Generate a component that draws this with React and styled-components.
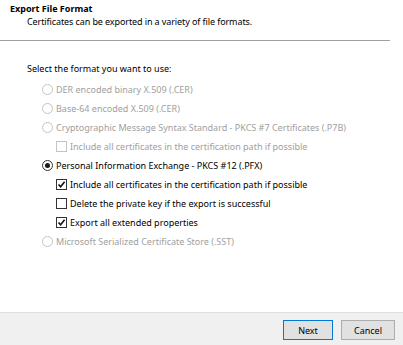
import React from "react";
import styled, {createGlobalStyle} from "styled-components";

const GlobalStyle = createGlobalStyle`
  html, body {
    margin: 0;
    padding: 0;
    background: #ffffff;
  }
  body {
    font-family: "Noto Sans", "Open Sans", sans-serif;
    font-size: 9px;
    color: #000000;
  }
`;

const Dialog = styled.div`
  width: 403px;
  height: 345px;
  display: flex;
  flex-direction: column;
  overflow: hidden;
  background: #ffffff;
`;

const Header = styled.div`
  display: flex;
  flex-direction: column;
  padding: 2px 0 0 10px;
  height: 38px;
  border-bottom: 1px solid #a0a0a0;
  width: 380px;
  box-sizing: content-box;
`;

const Title = styled.div`
  font-weight: 700;
  line-height: 13px;
`;

const Subtitle = styled.div`
  padding-left: 17px;
  line-height: 13px;
  letter-spacing: -0.1px;
`;

const Body = styled.div`
  flex: 1;
  display: flex;
  flex-direction: column;
  padding: 21px 0 0 27px;
`;

const Prompt = styled.div`
  line-height: 13px;
  margin-bottom: 5px;
`;

const Option = styled.label`
  display: flex;
  align-items: center;
  height: 19px;
  padding-left: ${({indent}) => indent || 15}px;
  gap: 3px;
  color: ${({disabled}) => (disabled ? "#a0a0a0" : "#000000")};
`;

const Radio = styled.span`
  width: 9px;
  height: 9px;
  border-radius: 50%;
  border: 1px solid ${({disabled}) => (disabled ? "#c4c4c4" : "#333333")};
  background: #ffffff;
  display: flex;
  align-items: center;
  justify-content: center;
  flex-shrink: 0;

  &::after {
    content: "";
    width: 5px;
    height: 5px;
    border-radius: 50%;
    background: #1a1a1a;
    display: ${({checked}) => (checked ? "block" : "none")};
  }
`;

const Box = styled.span`
  width: 9px;
  height: 9px;
  border: 1px solid ${({disabled}) => (disabled ? "#c4c4c4" : "#333333")};
  background: #ffffff;
  display: flex;
  align-items: center;
  justify-content: center;
  flex-shrink: 0;
`;

const Footer = styled.div`
  height: 33px;
  flex-shrink: 0;
  background: #f0f0f0;
  border-top: 1px solid #dfdfdf;
  display: flex;
  justify-content: flex-end;
  align-items: flex-start;
  padding: 7px 8px 0 0;
  gap: 8px;
  box-sizing: border-box;
`;

const Button = styled.button`
  width: ${({wide}) => (wide ? 54 : 50)}px;
  height: 20px;
  padding: 0;
  font-family: inherit;
  font-size: 9px;
  color: #000000;
  background: #e1e1e1;
  border: 1px solid ${({primary}) => (primary ? "#0078d7" : "#adadad")};
  box-shadow: ${({primary}) => (primary ? "inset 0 0 0 1px #e1e1e1" : "none")};
`;

const Check = () => (
    <svg width="9" height="9" viewBox="0 0 9 9">
        <path d="M1.5 4.5 L3.6 6.8 L7.6 1.8" fill="none" stroke="#111" strokeWidth="1.6"/>
    </svg>
);

const RadioOption = ({label, checked, disabled}) => (
    <Option disabled={disabled}>
        <Radio checked={checked} disabled={disabled}/>
        {label}
    </Option>
);

const CheckOption = ({label, checked, disabled}) => (
    <Option disabled={disabled} indent={29}>
        <Box disabled={disabled}>{checked ? <Check/> : null}</Box>
        {label}
    </Option>
);

const App = () => {
    return (
        <Dialog>
            <GlobalStyle/>
            <Header>
                <Title>Export File Format</Title>
                <Subtitle>Certificates can be exported in a variety of file formats.</Subtitle>
            </Header>
            <Body>
                <Prompt>Select the format you want to use:</Prompt>
                <RadioOption disabled label="DER encoded binary X.509 (.CER)"/>
                <RadioOption disabled label="Base-64 encoded X.509 (.CER)"/>
                <RadioOption disabled label="Cryptographic Message Syntax Standard - PKCS #7 Certificates (.P7B)"/>
                <CheckOption disabled label="Include all certificates in the certification path if possible"/>
                <RadioOption checked label="Personal Information Exchange - PKCS #12 (.PFX)"/>
                <CheckOption checked label="Include all certificates in the certification path if possible"/>
                <CheckOption label="Delete the private key if the export is successful"/>
                <CheckOption checked label="Export all extended properties"/>
                <RadioOption disabled label="Microsoft Serialized Certificate Store (.SST)"/>
            </Body>
            <Footer>
                <Button primary>Next</Button>
                <Button wide>Cancel</Button>
            </Footer>
        </Dialog>
    );
};

export default App;
